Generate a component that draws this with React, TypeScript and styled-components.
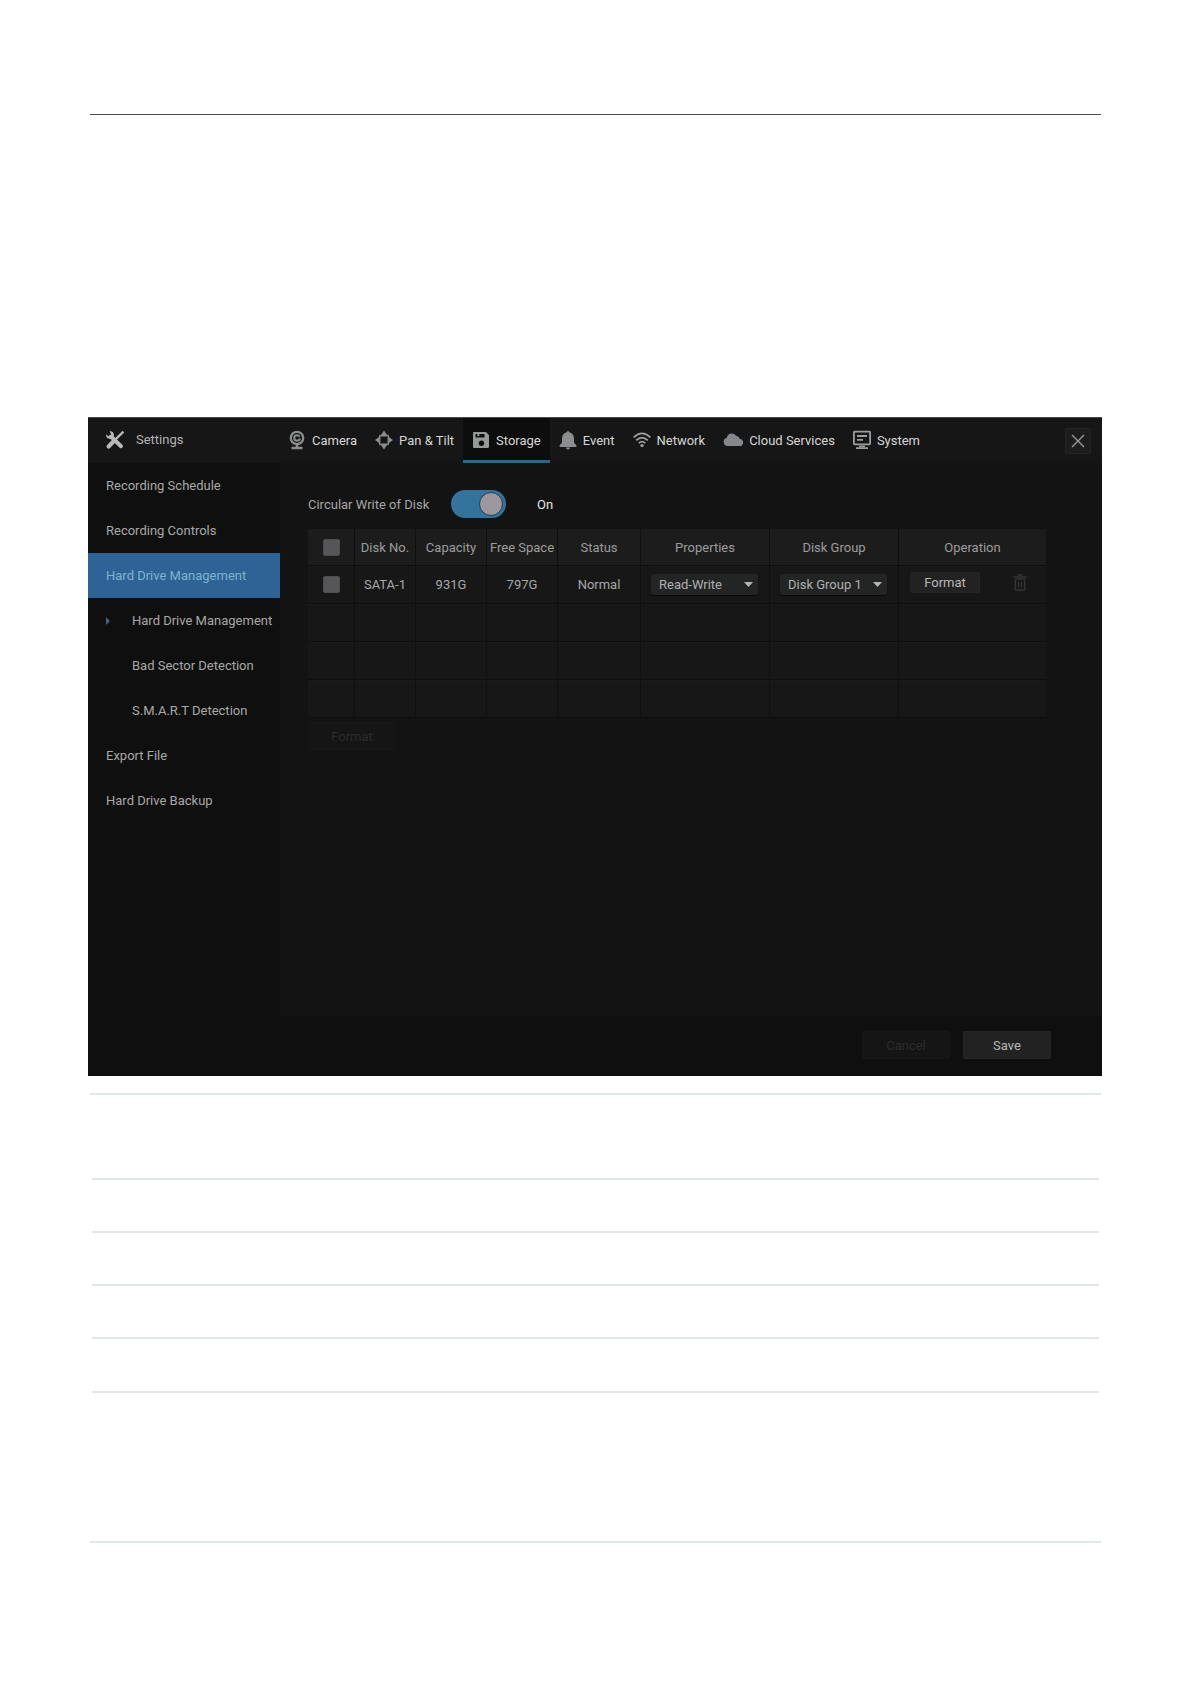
import React, { useState } from "react";
import styled, { createGlobalStyle } from "styled-components";

const GlobalStyle = createGlobalStyle`
  * { box-sizing: border-box; }
  body { margin: 0; background: #ffffff; }
  body, button, select, input { font-family: Roboto, "Liberation Sans", sans-serif; font-size: 13px; }
`;

const Page = styled.div`
  min-height: 100vh;
  padding: 114px 89px 120px 88px;
`;

const TopRule = styled.hr`
  margin: 0 1px 0 2px;
  border: 0;
  border-top: 1px solid #4c4c4c;
`;

const Shell = styled.main`
  display: flex;
  flex-direction: column;
  margin-top: 302px;
  background: #0f0f0f;
  color: #a6a6a6;
`;

const Header = styled.header`
  display: flex;
  align-items: stretch;
  height: 46px;
  border-top: 1px solid #4a4a4a;
  background: #161616;
`;

const Brand = styled.div`
  display: flex;
  align-items: center;
  gap: 11px;
  width: 191px;
  padding: 0 0 2px 17px;
  color: #b4b4b4;
`;

const Tabs = styled.nav`
  display: flex;
  flex: 1;
`;

const Tab = styled.button<{ $active: boolean }>`
  display: flex;
  align-items: center;
  gap: 6px;
  padding: 2px 9px 0;
  border: 0;
  border-bottom: 3px solid ${(p) => (p.$active ? "#2f668a" : "transparent")};
  background: ${(p) => (p.$active ? "#0d0d0d" : "transparent")};
  color: #d6d6d6;
  white-space: nowrap;
`;

const Icon = styled.svg`
  display: block;
  flex: none;
`;

const CloseButton = styled.button`
  display: flex;
  align-items: center;
  justify-content: center;
  align-self: center;
  width: 26px;
  height: 26px;
  margin-right: 11px;
  padding: 0;
  border: 1px solid #242424;
  border-radius: 2px;
  background: #1d1d1d;
  color: #9a9a9a;
`;

const Body = styled.div`
  display: flex;
  min-height: 553px;
`;

const Sidebar = styled.nav`
  display: flex;
  flex-direction: column;
  flex: none;
  width: 192px;
  background: #0f0f0f;
`;

const SideItem = styled.button<{ $active?: boolean; $sub?: boolean }>`
  display: flex;
  align-items: center;
  height: 45px;
  padding: 0 0 0 18px;
  border: 0;
  background: ${(p) => (p.$active ? "#2f6396" : "transparent")};
  color: ${(p) => (p.$active ? "#7db4cf" : "#a8a8a8")};
  text-align: left;
  white-space: nowrap;
`;

const Marker = styled.span<{ $on: boolean }>`
  width: 26px;
  &::before {
    content: "";
    display: block;
    width: 0;
    border: 4px solid transparent;
    border-left: 4px solid ${(p) => (p.$on ? "#4a5f86" : "transparent")};
    border-right: 0;
  }
`;

const Content = styled.section`
  flex: 1;
  min-width: 0;
  padding: 27px 56px 0 28px;
  background: #131313;
`;

const SwitchRow = styled.div`
  display: flex;
  align-items: center;
  height: 28px;
  margin-bottom: 11px;
`;

const SwitchLabel = styled.label`
  width: 143px;
`;

const Switch = styled.input`
  appearance: none;
  display: flex;
  align-items: center;
  width: 55px;
  height: 28px;
  margin: 0 31px 0 0;
  padding: 0 3px;
  border-radius: 14px;
  background: #444444;
  &::before {
    content: "";
    width: 22px;
    height: 22px;
    border: 1px solid #1f3c50;
    border-radius: 50%;
    background: #9d989e;
  }
  &:checked { background: #33739d; }
  &:checked::before { margin-left: auto; }
`;

const SwitchState = styled.span`
  color: #e4e4e4;
`;

const DiskTable = styled.table`
  width: 100%;
  table-layout: fixed;
  border-spacing: 0;
  border-radius: 3px;
  background: #171717;
  text-align: center;
`;

const HeadCell = styled.th`
  height: 37px;
  padding: 0;
  border-right: 1px solid #0f0f0f;
  border-bottom: 1px solid #0d0d0d;
  background: #1c1c1c;
  color: #9c9c9c;
  font-weight: 400;
  white-space: nowrap;
  &:last-child { border-right: 0; }
`;

const Cell = styled.td`
  height: 38px;
  padding: 0;
  border-right: 1px solid #101010;
  border-bottom: 1px solid #0f0f0f;
  box-shadow: inset 0 1px #1a1a1a;
  color: #a8a8a8;
  white-space: nowrap;
  &:last-child { border-right: 0; }
`;

const Check = styled.input`
  appearance: none;
  display: block;
  width: 17px;
  height: 17px;
  margin: 0 auto;
  border: 1px solid #4e4e50;
  border-radius: 2px;
  background: #565658;
  &:checked { background: #33739d; }
`;

const SelectBox = styled.div`
  display: grid;
  align-items: center;
  margin: 0 11px 0 10px;
  > * { grid-area: 1 / 1; }
  > svg { justify-self: end; margin-right: 5px; pointer-events: none; }
`;

const Select = styled.select`
  appearance: none;
  width: 100%;
  height: 21px;
  padding: 0 0 0 8px;
  border: 0;
  border-radius: 2px;
  background: #232424;
  color: #b0b0b0;
  box-shadow: 0 1px 1px #0b0b0b;
`;

const Operations = styled.div`
  display: flex;
  align-items: center;
  gap: 33px;
  padding: 0 0 4px 11px;
`;

const Button = styled.button<{ $kind: "row" | "quiet" | "solid" }>`
  width: ${(p) => (p.$kind === "row" ? 70 : 88)}px;
  height: ${(p) => (p.$kind === "row" ? 21 : 28)}px;
  padding: 0;
  border: 1px solid ${(p) => (p.$kind === "quiet" ? "#171717" : "#252525")};
  border-radius: 2px;
  background: ${(p) => (p.$kind === "quiet" ? "#151515" : "#222222")};
  color: ${(p) => (p.$kind === "quiet" ? "#2b2b2b" : "#b8b8b8")};
`;

const IconButton = styled.button`
  padding: 0;
  border: 0;
  background: transparent;
  color: #343434;
`;

const TableActions = styled.div`
  display: flex;
  padding-top: 4px;
`;

const Footer = styled.footer`
  display: flex;
  justify-content: flex-end;
  gap: 13px;
  height: 60px;
  padding: 15px 51px 0 0;
  background: #0f0f0f;
`;

const RuledArea = styled.section`
  margin: 17px 1px 0 2px;
  border-top: 2px solid #e1e6e7;
  border-bottom: 2px solid #e1e6e7;
`;

const RuledRow = styled.div<{ $size: number }>`
  height: ${(p) => p.$size}px;
  margin: 0 2px;
  border-bottom: 2px solid #e1e6e7;
  &:last-child { border-bottom: 0; }
`;

function ToolsIcon() {
  return (
    <Icon width="20" height="20" viewBox="0 0 20 20" fill="none" stroke="#b9b9b9">
      <path d="M6 6.5 16 16.2" strokeWidth="4" strokeLinecap="round" />
      <path
        d="M1.2 4.6 4 6.6 6.4 4.4 4.6 1.2C7.4 0.8 9.6 3.2 8.8 6.2L6.2 8.9C3.2 9.6 0.8 7.4 1.2 4.6Z"
        fill="#b9b9b9"
        stroke="none"
      />
      <path d="M18.4 1.6 10.6 9.4" strokeWidth="2.2" />
      <path d="M8.4 11.6 3.6 16.4" strokeWidth="4.2" strokeLinecap="round" />
    </Icon>
  );
}

function CameraIcon() {
  return (
    <Icon width="18" height="20" viewBox="0 0 18 20" fill="none" stroke="#8b8d8e">
      <circle cx="9" cy="8" r="6.2" strokeWidth="2.3" />
      <circle cx="9" cy="8" r="2.8" strokeWidth="2" />
      <path d="M9.4 7.8h3v-3" stroke="#161616" strokeWidth="1.2" />
      <path d="M9 14.5V17M3.5 18h11" strokeWidth="2.4" />
    </Icon>
  );
}

function PanIcon() {
  return (
    <Icon width="18" height="20" viewBox="0 0 18 20" fill="#8b8d8e">
      <path d="M9 0.6 13 6.6H5ZM9 19.4 13 13.4H5ZM0 10 5.4 6v8ZM18 10 12.6 6v8Z" />
      <path d="M4.4 7.4V5.4H6.4M11.6 5.4H13.6V7.4M13.6 12.6V14.6H11.6M6.4 14.6H4.4V12.6" fill="none" stroke="#8b8d8e" />
    </Icon>
  );
}

function StorageIcon() {
  return (
    <Icon width="18" height="20" viewBox="0 0 18 20">
      <path fillRule="evenodd" fill="#96999a" d="M2 2H14L17 5V16.5Q17 18 15.5 18H2Q1 18 1 17V3Q1 2 2 2ZM3.5 4V7.6H12.5V4Z" />
      <path d="M5.4 3.5h2v2.6h-2Z" fill="#96999a" />
      <circle cx="9.5" cy="13.2" r="2.7" fill="#0d0d0d" />
    </Icon>
  );
}

function BellIcon() {
  return (
    <Icon width="18" height="20" viewBox="0 0 18 20" fill="#8b8d8e">
      <path d="M9 0.6 10.2 2.2C13.4 2.8 15 5.4 15 8.4V12.6L17.4 15.6V17H0.6V15.6L3 12.6V8.4C3 5.4 4.6 2.8 7.8 2.2ZM6.8 17.4H11.2Q10.8 19.4 9 19.4T6.8 17.4Z" />
    </Icon>
  );
}

function WifiIcon() {
  return (
    <Icon width="18" height="20" viewBox="0 0 18 20" fill="none" stroke="#9b9d9e" strokeWidth="1.8">
      <path d="M0.6 7.4Q9-0.6 17.4 7.4M3.2 10.4Q9 4.8 14.8 10.4M5.8 13.2Q9 10 12.2 13.2" />
      <circle cx="9" cy="15.6" r="1.7" fill="#9b9d9e" stroke="none" />
    </Icon>
  );
}

function CloudIcon() {
  return (
    <Icon width="20" height="20" viewBox="0 0 20 20" fill="#85888a">
      <path d="M4.2 16A4.2 4.2 0 0 1 3.8 7.8 5.2 5.2 0 0 1 13.4 6 3.6 3.6 0 0 1 16.6 8.8 3.6 3.6 0 0 1 16.4 16Z" />
    </Icon>
  );
}

function SystemIcon() {
  return (
    <Icon width="18" height="20" viewBox="0 0 18 20" fill="none" stroke="#9b9d9e" strokeWidth="1.8">
      <rect x="0.9" y="1.6" width="16.2" height="12.8" rx="0.8" />
      <path d="M4 6h10M4 9.8h6M3 18.2h12" />
      <path d="M6 16.4h6" strokeWidth="1.6" />
    </Icon>
  );
}

function CloseIcon() {
  return (
    <Icon width="14" height="14" viewBox="0 0 14 14" fill="none" stroke="currentColor" strokeWidth="1.4">
      <path d="M1 1 13 13M13 1 1 13" />
    </Icon>
  );
}

function CaretIcon() {
  return (
    <Icon width="9" height="5" viewBox="0 0 9 5" fill="#b4b4b4">
      <path d="M0 0H9L4.5 5Z" />
    </Icon>
  );
}

function TrashIcon() {
  return (
    <Icon width="14" height="17" viewBox="0 0 14 17" fill="none" stroke="currentColor" strokeWidth="1.4">
      <path d="M0.5 3H13.5M4.5 1H9.5M2.4 5V16H11.6V5H2.4M5.6 8V13.6M8.4 8V13.6" />
    </Icon>
  );
}

const tabs = [
  { name: "Camera", icon: <CameraIcon /> },
  { name: "Pan & Tilt", icon: <PanIcon /> },
  { name: "Storage", icon: <StorageIcon /> },
  { name: "Event", icon: <BellIcon /> },
  { name: "Network", icon: <WifiIcon /> },
  { name: "Cloud Services", icon: <CloudIcon /> },
  { name: "System", icon: <SystemIcon /> },
];

const sideItems = [
  { name: "Recording Schedule" },
  { name: "Recording Controls" },
  { name: "Hard Drive Management", active: true },
  { name: "Hard Drive Management", sub: true, current: true },
  { name: "Bad Sector Detection", sub: true },
  { name: "S.M.A.R.T Detection", sub: true },
  { name: "Export File" },
  { name: "Hard Drive Backup" },
];

const columns = [
  { name: "Disk No.", width: 61 },
  { name: "Capacity", width: 71 },
  { name: "Free Space", width: 71 },
  { name: "Status", width: 83 },
  { name: "Properties", width: 129 },
  { name: "Disk Group", width: 129 },
  { name: "Operation", width: 147 },
];

const ruledRows = [85, 53, 53, 53, 54, 148];

export default function App() {
  const [tab, setTab] = useState("Storage");
  const [circular, setCircular] = useState(true);
  return (
    <>
      <GlobalStyle />
      <Page>
        <TopRule />
        <Shell>
          <Header>
            <Brand>
              <ToolsIcon />
              Settings
            </Brand>
            <Tabs>
              {tabs.map((t) => (
                <Tab key={t.name} $active={t.name === tab} onClick={() => setTab(t.name)}>
                  {t.icon}
                  {t.name}
                </Tab>
              ))}
            </Tabs>
            <CloseButton aria-label="Close">
              <CloseIcon />
            </CloseButton>
          </Header>
          <Body>
            <Sidebar>
              {sideItems.map((item, i) => (
                <SideItem key={i} $active={item.active} $sub={item.sub}>
                  {item.sub && <Marker $on={!!item.current} />}
                  {item.name}
                </SideItem>
              ))}
            </Sidebar>
            <Content>
              <SwitchRow>
                <SwitchLabel htmlFor="circular">Circular Write of Disk</SwitchLabel>
                <Switch
                  id="circular"
                  type="checkbox"
                  checked={circular}
                  onChange={(e) => setCircular(e.target.checked)}
                />
                <SwitchState>{circular ? "On" : "Off"}</SwitchState>
              </SwitchRow>
              <DiskTable>
                <colgroup>
                  <col style={{ width: 47 }} />
                  {columns.map((c) => (
                    <col key={c.name} style={{ width: c.width }} />
                  ))}
                </colgroup>
                <thead>
                  <tr>
                    <HeadCell>
                      <Check type="checkbox" aria-label="Select all disks" />
                    </HeadCell>
                    {columns.map((c) => (
                      <HeadCell key={c.name}>{c.name}</HeadCell>
                    ))}
                  </tr>
                </thead>
                <tbody>
                  <tr>
                    <Cell>
                      <Check type="checkbox" aria-label="Select SATA-1" />
                    </Cell>
                    <Cell>SATA-1</Cell>
                    <Cell>931G</Cell>
                    <Cell>797G</Cell>
                    <Cell>Normal</Cell>
                    <Cell>
                      <SelectBox>
                        <Select aria-label="Properties" defaultValue="Read-Write">
                          <option>Read-Write</option>
                        </Select>
                        <CaretIcon />
                      </SelectBox>
                    </Cell>
                    <Cell>
                      <SelectBox>
                        <Select aria-label="Disk Group" defaultValue="Disk Group 1">
                          <option>Disk Group 1</option>
                        </Select>
                        <CaretIcon />
                      </SelectBox>
                    </Cell>
                    <Cell>
                      <Operations>
                        <Button $kind="row">Format</Button>
                        <IconButton aria-label="Delete">
                          <TrashIcon />
                        </IconButton>
                      </Operations>
                    </Cell>
                  </tr>
                  {[0, 1, 2].map((r) => (
                    <tr key={r}>
                      <Cell />
                      {columns.map((c) => (
                        <Cell key={c.name} />
                      ))}
                    </tr>
                  ))}
                </tbody>
              </DiskTable>
              <TableActions>
                <Button $kind="quiet" disabled>
                  Format
                </Button>
              </TableActions>
            </Content>
          </Body>
          <Footer>
            <Button $kind="quiet" disabled>
              Cancel
            </Button>
            <Button $kind="solid">Save</Button>
          </Footer>
        </Shell>
        <RuledArea>
          {ruledRows.map((size, i) => (
            <RuledRow key={i} $size={size} />
          ))}
        </RuledArea>
      </Page>
    </>
  );
}
